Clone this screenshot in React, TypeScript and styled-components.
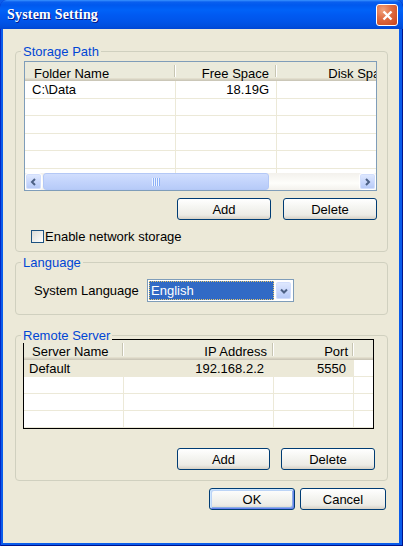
import React from "react";
import styled, { createGlobalStyle } from "styled-components";

const GlobalStyle = createGlobalStyle`
  html, body {
    margin: 0;
    padding: 0;
    background: #0a5ceb;
  }
  body {
    font-family: "Liberation Sans", Arial, sans-serif;
    font-size: 13px;
    color: #000;
  }
`;

const Window = styled.div`
  width: 403px;
  height: 546px;
  display: flex;
  flex-direction: column;
  background: #0a5ceb;
  border-radius: 7px 7px 0 0;
  box-shadow: inset 1px 0 #0427c4, inset -1px 0 #00138c, inset 0 -1px #00138c;
  overflow: hidden;
`;

const TitleBar = styled.div`
  height: 29px;
  flex: none;
  display: flex;
  align-items: center;
  justify-content: space-between;
  padding: 0 5px 0 7px;
  background: linear-gradient(
    180deg,
    #3a93ff 0px,
    #0a5fef 2px,
    #0058ee 5px,
    #0062f8 10px,
    #005af2 15px,
    #0055ea 21px,
    #004fde 26px,
    #0046d4 29px
  );
`;

const Title = styled.span`
  color: #fff;
  font-family: "Liberation Serif", "DejaVu Serif", serif;
  font-weight: bold;
  font-size: 14px;
  text-shadow: 1px 1px 0 #0a1883;
  letter-spacing: 0.2px;
`;

const CloseButton = styled.div`
  width: 22px;
  height: 22px;
  margin-top: 1px;
  box-sizing: border-box;
  border: 1px solid #fff;
  border-radius: 3px;
  background: radial-gradient(circle at 30% 25%, #f0a27c 0%, #e06f45 40%, #c8431a 100%);
  display: flex;
  align-items: center;
  justify-content: center;
`;

const Client = styled.div`
  flex: 1;
  margin: 0 4px 3px 3px;
  background: #ece9d8;
  display: flex;
  flex-direction: column;
`;

const Group = styled.div<{ $top: number; $h: number }>`
  position: relative;
  margin: ${(p) => p.$top}px 11px 0 12px;
  height: ${(p) => p.$h}px;
  box-sizing: border-box;
  border: 1px solid #d0d0bf;
  border-radius: 4px;
  display: flex;
  flex-direction: column;
`;

const Legend = styled.span`
  position: absolute;
  top: -8px;
  left: 5px;
  padding: 0 2px;
  line-height: 15px;
  background: #ece9d8;
  color: #0046d5;
`;

const GroupBody = styled.div<{ $pt: number; $pl: number }>`
  padding: ${(p) => p.$pt}px 0 0 ${(p) => p.$pl}px;
  display: flex;
  flex-direction: column;
`;

const ListBox = styled.div<{ $w: number; $h: number; $border: string }>`
  width: ${(p) => p.$w}px;
  height: ${(p) => p.$h}px;
  box-sizing: border-box;
  border: 1px solid ${(p) => p.$border};
  background: #fff;
  display: flex;
  flex-direction: column;
  overflow: hidden;
`;

const HeaderRow = styled.div<{ $h: number }>`
  flex: none;
  height: ${(p) => p.$h}px;
  box-sizing: border-box;
  display: flex;
  background: #ebeadb;
  box-shadow: inset 0 -1px #cbc7b8, inset 0 -2px #d6d2c2, inset 0 -3px #e2decd;
`;

const HeaderCell = styled.div<{ $w: number; $align: string; $pad: number }>`
  flex: none;
  width: ${(p) => p.$w}px;
  box-sizing: border-box;
  position: relative;
  padding: 4px ${(p) => (p.$align === "right" ? p.$pad : 0)}px 0
    ${(p) => (p.$align === "left" ? p.$pad : 0)}px;
  text-align: ${(p) => p.$align};
  white-space: nowrap;
  line-height: 15px;

  &::after {
    content: "";
    position: absolute;
    right: 1px;
    top: 3px;
    bottom: 4px;
    width: 1px;
    background: #c7c5b2;
    box-shadow: 1px 0 #fff;
  }
`;

const Body = styled.div`
  flex: 1;
  overflow: hidden;
  display: flex;
  flex-direction: column;
`;

const Row = styled.div<{ $h: number }>`
  flex: none;
  height: ${(p) => p.$h}px;
  display: flex;
`;

const Cell = styled.div<{ $w: number; $align: string; $pad: number; $lh: number; $sel?: boolean }>`
  flex: none;
  width: ${(p) => p.$w}px;
  box-sizing: border-box;
  border-right: 1px solid #ece9d8;
  border-bottom: 1px solid #ece9d8;
  padding: 1px ${(p) => (p.$align === "right" ? p.$pad : 0)}px 0
    ${(p) => (p.$align === "left" ? p.$pad : 0)}px;
  text-align: ${(p) => p.$align};
  white-space: nowrap;
  line-height: ${(p) => p.$lh}px;
  background: ${(p) => (p.$sel ? "#ece9d8" : "transparent")};
`;

const FillerCell = styled.div`
  flex: 1;
  border-bottom: 1px solid #ece9d8;
`;

const HScroll = styled.div`
  flex: none;
  height: 17px;
  display: flex;
  background: linear-gradient(180deg, #f3f1ec 0%, #fefefb 60%, #f3f1ec 100%);
`;

const ScrollBtn = styled.div`
  flex: none;
  width: 17px;
  height: 17px;
  box-sizing: border-box;
  border: 1px solid #fff;
  border-radius: 3px;
  background: linear-gradient(180deg, #e1eafe 0%, #cbd9fc 50%, #b4c8f6 100%);
  box-shadow: inset 0 0 0 1px #d2defc;
  display: flex;
  align-items: center;
  justify-content: center;
`;

const Thumb = styled.div<{ $w: number }>`
  flex: none;
  width: ${(p) => p.$w}px;
  margin-left: 1px;
  box-sizing: border-box;
  border: 1px solid #b4c8f6;
  border-radius: 3px;
  background: linear-gradient(180deg, #d1defd 0%, #c3d4fc 50%, #b7cbf8 100%);
  display: flex;
  align-items: center;
  justify-content: center;
`;

const Grip = styled.div`
  width: 8px;
  height: 8px;
  background: repeating-linear-gradient(90deg, #eef4fe 0 1px, #8cb0f8 1px 2px);
`;

const Track = styled.div`
  flex: 1;
`;

const ButtonRow = styled.div<{ $mt: number; $pr: number; $gap: number }>`
  display: flex;
  justify-content: flex-end;
  gap: ${(p) => p.$gap}px;
  margin-top: ${(p) => p.$mt}px;
  padding-right: ${(p) => p.$pr}px;
`;

const Button = styled.button<{ $w: number; $default?: boolean }>`
  width: ${(p) => p.$w}px;
  height: 22px;
  box-sizing: border-box;
  border: 1px solid #003c74;
  border-radius: 3px;
  padding: 0;
  font-family: "Liberation Sans", Arial, sans-serif;
  font-size: 13px;
  color: #000;
  background: linear-gradient(180deg, #ffffff 0%, #f4f4f0 45%, #ecebe6 80%, #d6d0c5 100%);
  box-shadow: ${(p) =>
    p.$default
      ? "inset 1px 1px 0 #cee7ff, inset -1px -1px 0 #6982ee, inset 2px 2px 0 #bcd4f6, inset -2px -2px 0 #89ade4"
      : "none"};
`;

const CheckRow = styled.label`
  display: flex;
  align-items: center;
  gap: 1px;
  margin: 9px 0 0 7px;
  line-height: 15px;
`;

const CheckBox = styled.span`
  width: 13px;
  height: 13px;
  box-sizing: border-box;
  border: 1px solid #1c5180;
  background: linear-gradient(135deg, #dcdcd7 0%, #f5f5f2 70%, #ffffff 100%);
`;

const FieldRow = styled.div`
  display: flex;
  align-items: center;
`;

const FieldLabel = styled.span`
  width: 113px;
  flex: none;
`;

const Combo = styled.div`
  width: 147px;
  height: 23px;
  box-sizing: border-box;
  border: 1px solid #7f9db9;
  background: #fff;
  padding: 1px;
  display: flex;
  gap: 1px;
`;

const ComboValue = styled.div`
  flex: 1;
  background: #316ac5;
  color: #fff;
  outline: 1px dotted #e8c86a;
  outline-offset: -1px;
  padding-left: 2px;
  line-height: 20px;
`;

const ComboBtn = styled(ScrollBtn)`
  height: 19px;
`;

const Footer = styled.div`
  display: flex;
  justify-content: flex-end;
  gap: 5px;
  margin-top: 7px;
  padding-right: 13px;
`;

type Col = { title: string; w: number; align: "left" | "right"; hp: number; cp: number };

const storageCols: Col[] = [
  { title: "Folder Name", w: 151, align: "left", hp: 9, cp: 7 },
  { title: "Free Space", w: 101, align: "right", hp: 8, cp: 7 },
  { title: "Disk Space", w: 125, align: "right", hp: 8, cp: 7 },
];
const storageRows = [["C:\\Data", "18.19G", ""], ["", "", ""], ["", "", ""], ["", "", ""], ["", "", ""], ["", "", ""]];

const serverCols: Col[] = [
  { title: "Server Name", w: 100, align: "left", hp: 8, cp: 5 },
  { title: "IP Address", w: 150, align: "right", hp: 7, cp: 9 },
  { title: "Port", w: 80, align: "right", hp: 6, cp: 7 },
];
const serverRows = [["Default", "192.168.2.2", "5550"], ["", "", ""], ["", "", ""], ["", "", ""]];

const Chevron = ({ dir }: { dir: "left" | "right" | "down" }) => {
  const d =
    dir === "left" ? "M6 2 L3 5 L6 8" : dir === "right" ? "M3 2 L6 5 L3 8" : "M2 3.5 L5 6.5 L8 3.5";
  return (
    <svg width="9" height="10" viewBox="0 0 9 10">
      <path d={d} fill="none" stroke="#4d6185" strokeWidth="2" />
    </svg>
  );
};

const ListView = ({
  cols,
  rows,
  w,
  h,
  border,
  headerH,
  rowH,
  selectFirst,
  scroll,
  filler,
}: {
  cols: Col[];
  rows: string[][];
  w: number;
  h: number;
  border: string;
  headerH: number;
  rowH: number;
  selectFirst?: boolean;
  scroll?: boolean;
  filler?: boolean;
}) => (
  <ListBox $w={w} $h={h} $border={border}>
    <HeaderRow $h={headerH}>
      {cols.map((c) => (
        <HeaderCell key={c.title} $w={c.w} $align={c.align} $pad={c.hp}>
          {c.title}
        </HeaderCell>
      ))}
    </HeaderRow>
    <Body>
      {rows.map((r, i) => (
        <Row key={i} $h={rowH}>
          {cols.map((c, j) => (
            <Cell
              key={j}
              $w={c.w}
              $align={c.align}
              $pad={c.cp}
              $lh={Math.floor(rowH) - 2}
              $sel={selectFirst && i === 0}
            >
              {r[j]}
            </Cell>
          ))}
          {filler && <FillerCell />}
        </Row>
      ))}
    </Body>
    {scroll && (
      <HScroll>
        <ScrollBtn>
          <Chevron dir="left" />
        </ScrollBtn>
        <Thumb $w={226}>
          <Grip />
        </Thumb>
        <Track />
        <ScrollBtn>
          <Chevron dir="right" />
        </ScrollBtn>
      </HScroll>
    )}
  </ListBox>
);

export default function App() {
  return (
    <>
      <GlobalStyle />
      <Window>
        <TitleBar>
          <Title>System Setting</Title>
          <CloseButton>
            <svg width="13" height="13" viewBox="0 0 13 13">
              <path d="M2.5 2.5 L10.5 10.5 M10.5 2.5 L2.5 10.5" stroke="#fff" strokeWidth="2.4" />
            </svg>
          </CloseButton>
        </TitleBar>
        <Client>
          <Group $top={22} $h={201}>
            <Legend>Storage Path</Legend>
            <GroupBody $pt={9} $pl={8}>
              <ListView
                cols={storageCols}
                rows={storageRows}
                w={353}
                h={130}
                border="#7f9db9"
                headerH={19}
                rowH={17.5}
                scroll
              />
              <ButtonRow $mt={7} $pr={10} $gap={12}>
                <Button $w={94}>Add</Button>
                <Button $w={94}>Delete</Button>
              </ButtonRow>
              <CheckRow>
                <CheckBox />
                Enable network storage
              </CheckRow>
            </GroupBody>
          </Group>

          <Group $top={10} $h={53}>
            <Legend>Language</Legend>
            <GroupBody $pt={16} $pl={18}>
              <FieldRow>
                <FieldLabel>System Language</FieldLabel>
                <Combo>
                  <ComboValue>English</ComboValue>
                  <ComboBtn>
                    <Chevron dir="down" />
                  </ComboBtn>
                </Combo>
              </FieldRow>
            </GroupBody>
          </Group>

          <Group $top={20} $h={146}>
            <Legend>Remote Server</Legend>
            <GroupBody $pt={3} $pl={7}>
              <ListView
                cols={serverCols}
                rows={serverRows}
                w={351}
                h={90}
                border="#000"
                headerH={20}
                rowH={17}
                selectFirst
                filler
              />
              <ButtonRow $mt={19} $pr={12} $gap={11}>
                <Button $w={93}>Add</Button>
                <Button $w={94}>Delete</Button>
              </ButtonRow>
            </GroupBody>
          </Group>

          <Footer>
            <Button $w={86} $default>
              OK
            </Button>
            <Button $w={86}>Cancel</Button>
          </Footer>
        </Client>
      </Window>
    </>
  );
}
